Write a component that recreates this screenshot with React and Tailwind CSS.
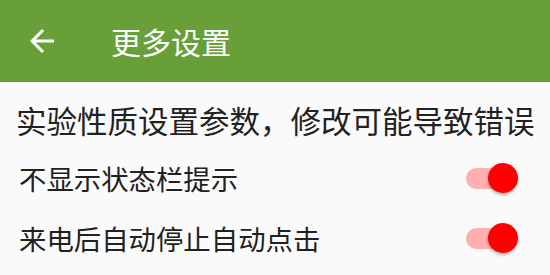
export default function App() {
  const font = { fontFamily: '"Noto Sans CJK SC", "Noto Sans", sans-serif' };
  const Switch = () => (
    <div className="relative w-[52px] h-[32px] flex items-center">
      <div className="w-[51px] h-[21px] rounded-full bg-[#ffafaf]" />
      <div className="absolute right-0 top-[1px] w-[30px] h-[30px] rounded-full bg-[#ff0000] shadow-[0_2px_3px_rgba(0,0,0,0.3)]" />
    </div>
  );
  return (
    <div className="w-[550px] h-[275px] bg-[#fafafa] overflow-hidden" style={font}>
      <div className="h-[82px] bg-[#689f38] flex items-center">
        <div className="ml-[24px] w-[36px] h-[36px] flex items-center justify-center">
          <svg width="36" height="36" viewBox="0 0 24 24" fill="#ffffff">
            <path d="M20 11H7.83l5.59-5.59L12 4l-8 8 8 8 1.41-1.41L7.83 13H20v-2z" />
          </svg>
        </div>
        <div className="ml-[51px] text-[30px] leading-[40px] text-white">更多设置</div>
      </div>
      <div className="pt-[18px]">
        <div className="pl-[16px] h-[40px] text-[30.5px] leading-[40px] text-[#212121] whitespace-nowrap">
          实验性质设置参数，修改可能导致错误
        </div>
        <div className="mt-[8px] h-[60px] flex items-center justify-between pl-[19px] pr-[32px]">
          <span className="text-[27.4px] leading-[36px] text-[#212121]">不显示状态栏提示</span>
          <Switch />
        </div>
        <div className="h-[60px] flex items-center justify-between pl-[19px] pr-[32px]">
          <span className="text-[27.4px] leading-[36px] text-[#212121]">来电后自动停止自动点击</span>
          <Switch />
        </div>
      </div>
    </div>
  );
}
